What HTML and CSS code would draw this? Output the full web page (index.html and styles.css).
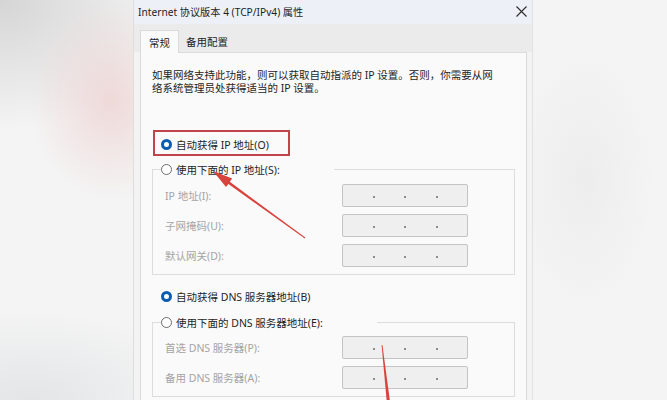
FILE: index.html
```html
<!DOCTYPE html>
<html lang="zh-CN">
<head>
  <meta charset="UTF-8">
  <title>Internet 协议版本 4 (TCP/IPv4) 属性</title>
  <link rel="stylesheet" href="styles.css">
</head>
<body>
  <div class="dialog">
    <div class="titlebar">
      <span class="title">Internet 协议版本 4 (TCP/IPv4) 属性</span>
      <svg class="close" width="11" height="11" viewBox="0 0 11 11">
        <path d="M0.5 0.5 L10.5 10.5 M10.5 0.5 L0.5 10.5" stroke="#2b2b2b" stroke-width="1.1" fill="none"/>
      </svg>
    </div>
    <div class="tabs">
      <span class="tab active">常规</span>
      <span class="tab">备用配置</span>
    </div>
    <div class="panel">
      <p class="intro">如果网络支持此功能，则可以获取自动指派的 IP 设置。否则，你需要从网<br>络系统管理员处获得适当的 IP 设置。</p>

      <div class="opt first">
        <span class="radio on"></span>自动获得 IP 地址(O)
        <span class="mark"></span>
      </div>
      <fieldset class="group">
        <legend><span class="opt"><span class="radio"></span>使用下面的 IP 地址(S):</span></legend>
        <div class="fields">
          <div class="field"><span class="label">IP 地址(I):</span><span class="ipbox"><i></i><i></i><i></i></span></div>
          <div class="field"><span class="label">子网掩码(U):</span><span class="ipbox"><i></i><i></i><i></i></span></div>
          <div class="field"><span class="label">默认网关(D):</span><span class="ipbox"><i></i><i></i><i></i></span></div>
        </div>
      </fieldset>

      <div class="opt dns">
        <span class="radio on"></span>自动获得 DNS 服务器地址(B)
      </div>
      <fieldset class="group second">
        <legend><span class="opt"><span class="radio"></span>使用下面的 DNS 服务器地址(E):</span></legend>
        <div class="fields">
          <div class="field"><span class="label">首选 DNS 服务器(P):</span><span class="ipbox"><i></i><i></i><i></i></span></div>
          <div class="field"><span class="label">备用 DNS 服务器(A):</span><span class="ipbox"><i></i><i></i><i></i></span></div>
        </div>
      </fieldset>
    </div>
  </div>

  <!-- red pointers drawn over the dialog -->
  <svg class="arrows" width="667" height="400" viewBox="0 0 667 400">
    <polygon fill="#d8443d" points="213,171 232.2,178.6 229.8,181.8 305.3,237.6 304.8,238.4 228.4,184.0 226.0,187.0"/>
    <polygon fill="#d8443d" points="381.6,345 382.4,345 389.8,400 386.6,400"/>
  </svg>
</body>
</html>
```

FILE: styles.css
```css
body {
  margin: 0;
  width: 667px;
  height: 400px;
  overflow: hidden;
  position: relative;
  font-family: "Noto Sans", "Noto Sans CJK SC", sans-serif;
  font-size: 10.5px;
  color: #222;
  background:
    radial-gradient(ellipse 80px 100px at 110px 100px, rgba(238, 212, 212, 0.85), rgba(240, 218, 218, 0)),
    radial-gradient(ellipse 170px 130px at 0 0, #d5d5d5, rgba(213, 213, 213, 0)),
    radial-gradient(ellipse 170px 90px at 30px 400px, #e3e5e7, rgba(227, 229, 231, 0)),
    radial-gradient(ellipse 70px 130px at 585px 180px, #ededed, rgba(237, 237, 237, 0)),
    #f4f4f4;
}

.dialog {
  margin-left: 133px;
  width: 400px;
  height: 400px;
  box-sizing: border-box;
  background: #f3f3f3;
  border-left: 1px solid #dedede;
  border-right: 1px solid #e2e2e2;
  display: flex;
  flex-direction: column;
}

.titlebar {
  height: 24px;
  flex: none;
  display: flex;
  align-items: center;
  justify-content: space-between;
  padding: 0 5px 2px 4px;
  box-sizing: border-box;
  background: #edf1f7;
}
.title {
  font-size: 10.2px;
  color: #1e1e1e;
}

.tabs {
  height: 28px;
  flex: none;
  display: flex;
  align-items: flex-end;
  padding-left: 6px;
  background: #ebebeb;
}
.tab {
  height: 18px;
  line-height: 16px;
  margin-left: 7px;
  color: #1e1e1e;
}
.tab.active {
  margin-left: 0;
  height: 23px;
  line-height: 24px;
  padding: 0 8px;
  box-sizing: border-box;
  background: #fafafa;
  border: 1px solid #dadada;
  border-bottom: none;
  position: relative;
  top: 1px;
}

.panel {
  flex: 1;
  margin: 0 5px 0 6px;
  padding: 16px 11px 0;
  background: #fafafa;
  border: 1px solid #dadada;
  border-bottom: none;
}

.intro {
  margin: 0;
  line-height: 13px;
  color: #242424;
}

.opt {
  display: flex;
  align-items: center;
  gap: 4px;
  height: 16px;
  white-space: nowrap;
  color: #1e1e1e;
}
.first {
  margin-top: 41px;
  padding-left: 9px;
  position: relative;
}
.dns {
  margin-top: 13px;
  padding-left: 9px;
}

.radio {
  width: 11px;
  height: 11px;
  box-sizing: border-box;
  border-radius: 50%;
  border: 1px solid #6e6e6e;
  background: #fff;
  flex: none;
}
.radio.on {
  border: 3px solid #0c5db0;
}

/* annotation frame around the first choice */
.mark {
  position: absolute;
  left: 1px;
  top: -6px;
  width: 137px;
  height: 26px;
  box-sizing: border-box;
  border: 2px solid #c2444b;
}

.group {
  margin: 9px 0 0;
  padding: 0 12px 7px;
  border: 1px solid #dddddd;
  min-width: 0;
}
.group.second {
  margin-top: 10px;
}
.group legend {
  margin-left: -4px;
  padding: 0 54px 0 0;
}

.fields {
  display: grid;
  row-gap: 7px;
  padding-top: 7px;
}
.second .fields {
  padding-top: 6px;
}
.field {
  display: grid;
  grid-template-columns: 177px 126px;
  align-items: center;
}
.label {
  color: #a4a4a4;
}
.ipbox {
  height: 23px;
  box-sizing: border-box;
  border: 1px solid #c4c4c4;
  border-radius: 2px;
  background: #efefef;
  display: flex;
  justify-content: space-evenly;
  align-items: center;
}
.ipbox i {
  width: 2px;
  height: 2px;
  margin-top: 3px;
  background: #8c8c8c;
}

.arrows {
  position: absolute;
  left: 0;
  top: 0;
  pointer-events: none;
}
```
